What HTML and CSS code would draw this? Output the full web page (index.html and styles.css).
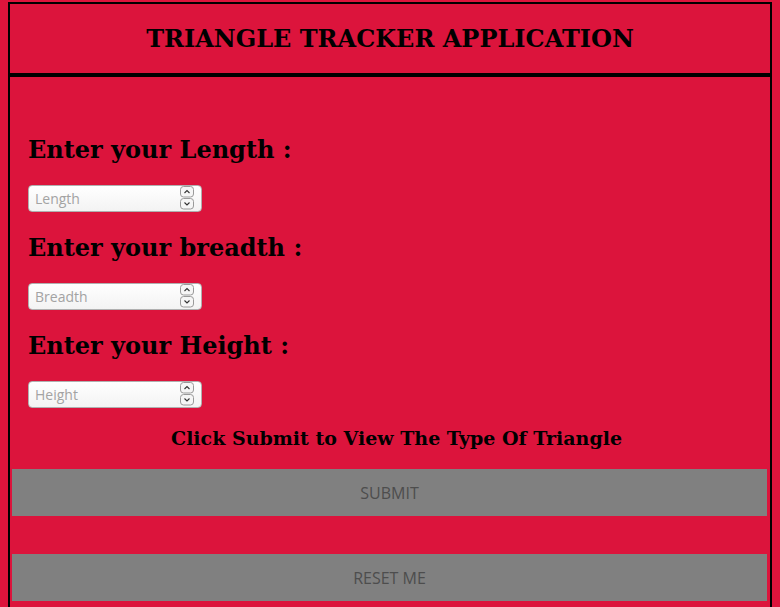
FILE: index.html
```html
<!DOCTYPE html>
<html>
<head>
<meta charset="utf-8">
<title>Triangle Tracker</title>
<link rel="stylesheet" href="styles.css">
</head>
<body>
<div class="header">
  <h1 class="title">TRIANGLE TRACKER APPLICATION</h1>
</div>
<div class="main">
  <form class="fields">
    <h2 class="label">Enter your Length :</h2>
    <span class="num">
      <input type="number" class="num-input" placeholder="Length">
      <svg class="spin" width="14" height="24" viewBox="0 0 14 24"><rect x="0.5" y="0.5" width="13" height="10.5" rx="3" fill="#f6f6f6" stroke="#9a9a9a"/><rect x="0.5" y="12.5" width="13" height="10.5" rx="3" fill="#f6f6f6" stroke="#9a9a9a"/><path d="M4.5 7 L7 4.5 L9.5 7" fill="none" stroke="#333" stroke-width="1.1"/><path d="M4.5 16.5 L7 19 L9.5 16.5" fill="none" stroke="#333" stroke-width="1.1"/></svg>
    </span>
    <h2 class="label">Enter your breadth :</h2>
    <span class="num">
      <input type="number" class="num-input" placeholder="Breadth">
      <svg class="spin" width="14" height="24" viewBox="0 0 14 24"><rect x="0.5" y="0.5" width="13" height="10.5" rx="3" fill="#f6f6f6" stroke="#9a9a9a"/><rect x="0.5" y="12.5" width="13" height="10.5" rx="3" fill="#f6f6f6" stroke="#9a9a9a"/><path d="M4.5 7 L7 4.5 L9.5 7" fill="none" stroke="#333" stroke-width="1.1"/><path d="M4.5 16.5 L7 19 L9.5 16.5" fill="none" stroke="#333" stroke-width="1.1"/></svg>
    </span>
    <h2 class="label">Enter your Height :</h2>
    <span class="num">
      <input type="number" class="num-input" placeholder="Height">
      <svg class="spin" width="14" height="24" viewBox="0 0 14 24"><rect x="0.5" y="0.5" width="13" height="10.5" rx="3" fill="#f6f6f6" stroke="#9a9a9a"/><rect x="0.5" y="12.5" width="13" height="10.5" rx="3" fill="#f6f6f6" stroke="#9a9a9a"/><path d="M4.5 7 L7 4.5 L9.5 7" fill="none" stroke="#333" stroke-width="1.1"/><path d="M4.5 16.5 L7 19 L9.5 16.5" fill="none" stroke="#333" stroke-width="1.1"/></svg>
    </span>
  </form>
  <h3 class="hint">Click Submit to View The Type Of Triangle</h3>
  <button class="btn" type="button">SUBMIT</button>
  <button class="btn btn-reset" type="button">RESET ME</button>
</div>
</body>
</html>
```
FILE: styles.css
```css
html, body {
  background: #dc143c;
}
body {
  margin: 2px 8px 0 8px;
  font-family: "DejaVu Serif", serif;
  color: #000;
}
.header {
  border: 2px solid #000;
  height: 69px;
  display: flex;
  align-items: center;
  justify-content: center;
}
.title {
  margin: 0;
  font-size: 24px;
  line-height: 28px;
  font-weight: bold;
}
.main {
  border: 2px solid #000;
  padding: 59px 3px 20px 2px;
}
.fields {
  display: flex;
  flex-direction: column;
  align-items: flex-start;
  padding-left: 16px;
  margin: 0;
}
.label {
  margin: 22px 0 0 0;
  font-size: 24px;
  line-height: 28px;
  font-weight: bold;
}
.label:first-child {
  margin-top: 0;
}
.num {
  position: relative;
  display: block;
  margin-top: 21px;
  width: 174px;
  height: 27px;
}
.num-input {
  box-sizing: border-box;
  width: 174px;
  height: 27px;
  margin: 0;
  padding: 0 26px 0 6px;
  border: 1px solid #b0b0b0;
  border-radius: 4px;
  background: linear-gradient(#ffffff, #f3f3f3);
  font-family: "Open Sans", sans-serif;
  font-size: 14px;
  color: #333;
  -moz-appearance: textfield;
  appearance: textfield;
}
.num-input::-webkit-inner-spin-button,
.num-input::-webkit-outer-spin-button {
  -webkit-appearance: none;
  margin: 0;
}
.num-input::placeholder {
  color: #a3a3a3;
}
.spin {
  position: absolute;
  right: 8px;
  top: 1px;
}
.hint {
  margin: 19px 0 0 14px;
  text-align: center;
  font-size: 19px;
  line-height: 22px;
  font-weight: bold;
}
.btn {
  display: block;
  width: 100%;
  height: 47px;
  margin: 20px 0 0 0;
  border: none;
  background: #808080;
  color: #4d4d4d;
  font-family: "Open Sans", sans-serif;
  font-size: 16px;
}
.btn-reset {
  margin-top: 38px;
}
```
